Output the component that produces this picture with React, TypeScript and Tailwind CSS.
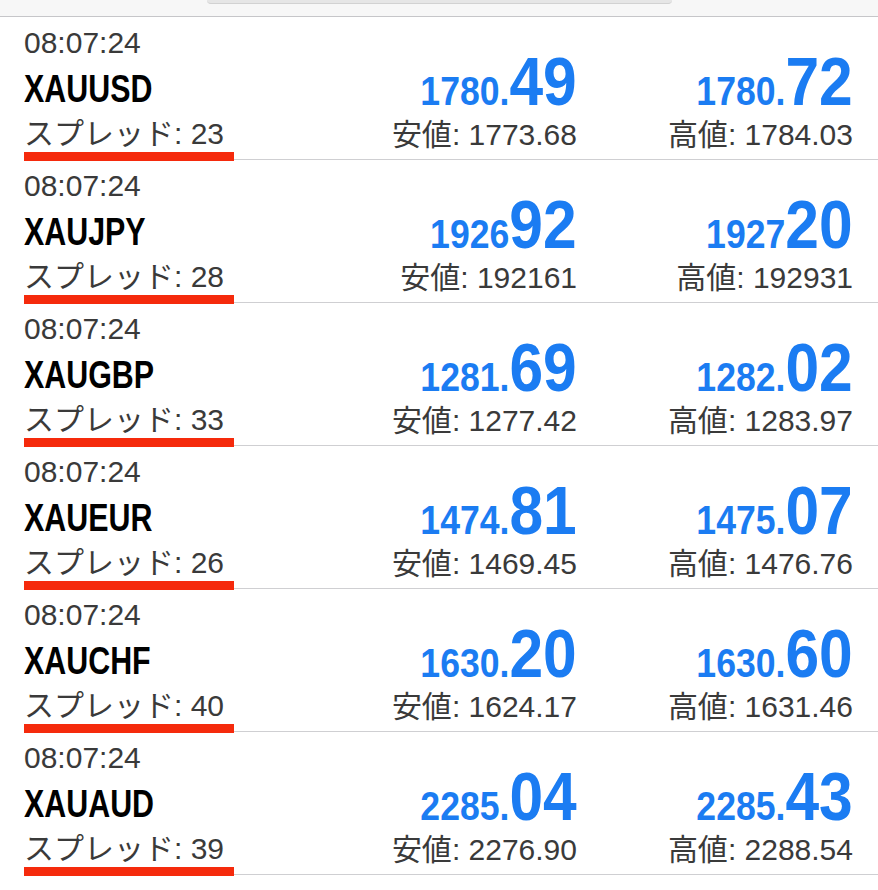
import React from "react";

type Row = {
  sym: string;
  spread: string;
  bidA: string;
  bidB: string;
  low: string;
  askA: string;
  askB: string;
  high: string;
};

const rows: Row[] = [
  { sym: "XAUUSD", spread: "23", bidA: "1780.", bidB: "49", low: "1773.68", askA: "1780.", askB: "72", high: "1784.03" },
  { sym: "XAUJPY", spread: "28", bidA: "1926", bidB: "92", low: "192161", askA: "1927", askB: "20", high: "192931" },
  { sym: "XAUGBP", spread: "33", bidA: "1281.", bidB: "69", low: "1277.42", askA: "1282.", askB: "02", high: "1283.97" },
  { sym: "XAUEUR", spread: "26", bidA: "1474.", bidB: "81", low: "1469.45", askA: "1475.", askB: "07", high: "1476.76" },
  { sym: "XAUCHF", spread: "40", bidA: "1630.", bidB: "20", low: "1624.17", askA: "1630.", askB: "60", high: "1631.46" },
  { sym: "XAUAUD", spread: "39", bidA: "2285.", bidB: "04", low: "2276.90", askA: "2285.", askB: "43", high: "2288.54" },
];

const FONT = { fontFamily: '"Liberation Sans", "Noto Sans CJK JP", Arial, sans-serif' };

function Price({ a, b, label, value }: { a: string; b: string; label: string; value: string }) {
  return (
    <div className="flex flex-col items-end">
      <div className="h-[68px] flex justify-end">
        <span className="inline-flex items-baseline scale-x-[0.89] origin-right font-bold text-[#1b7cf2] leading-none">
          <span className="text-[40px] leading-[68px]">{a}</span>
          <span className="text-[68px] leading-[68px]">{b}</span>
        </span>
      </div>
      <div className="mt-[5px] h-[30px] text-[30px] leading-[30px] text-[#3a3a3a] whitespace-nowrap">
        {label}: {value}
      </div>
    </div>
  );
}

export default function App() {
  return (
    <div className="w-[878px] h-[890px] bg-white overflow-hidden" style={FONT}>
      <div className="h-[17px] bg-[#f7f7f7] border-b border-[#c6c6c9] flex justify-center">
        <div className="w-[465px] h-[4px] rounded-b-[8px] bg-[#e6e6e6] border-b border-[#d2d2d2]" />
      </div>
      <div className="pl-[24px]">
        {rows.map((r) => (
          <div
            key={r.sym}
            className="relative h-[143px] border-b border-[#cfcfd2] pr-[25px] pt-[11px] flex"
          >
            <div className="flex-1 flex flex-col">
              <div className="h-[30px] text-[30px] leading-[30px] text-[#3a3a3a]">08:07:24</div>
              <div className="mt-[12px] h-[38px]">
                <span className="inline-block scale-x-[0.8] origin-left text-[38px] leading-[38px] font-bold text-black">
                  {r.sym}
                </span>
              </div>
              <div className="mt-[11px] h-[30px] text-[30px] leading-[30px] text-[#3a3a3a] whitespace-nowrap">
                スプレッド: {r.spread}
              </div>
            </div>
            <div className="w-[250px] flex flex-col justify-end pb-[9px]">
              <Price a={r.bidA} b={r.bidB} label="安値" value={r.low} />
            </div>
            <div className="w-[276px] flex flex-col justify-end pb-[9px]">
              <Price a={r.askA} b={r.askB} label="高値" value={r.high} />
            </div>
            <div className="absolute left-0 top-[135px] w-[210px] h-[9px] bg-[#f52a0c]" />
          </div>
        ))}
      </div>
    </div>
  );
}
